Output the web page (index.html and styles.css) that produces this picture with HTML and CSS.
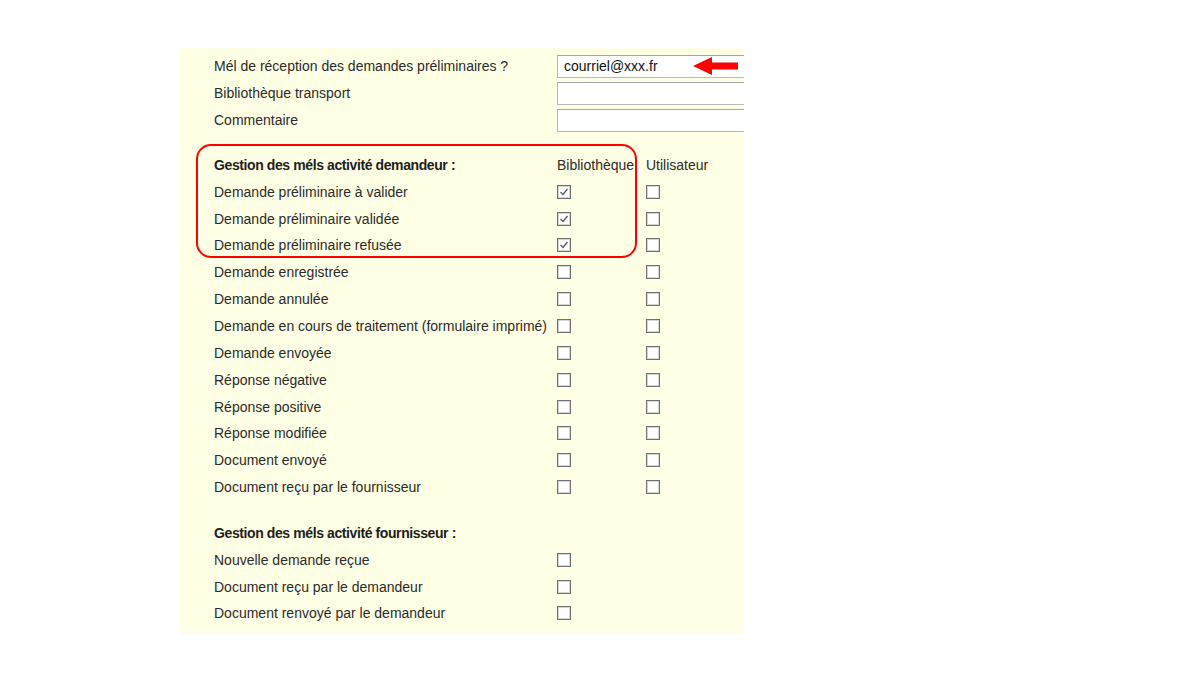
FILE: index.html
```html
<!DOCTYPE html>
<html lang="fr">
<head>
    <meta charset="UTF-8">
    <meta name="viewport" content="width=device-width, initial-scale=1.0">
    <title>Gestion des méls</title>
    <link rel="stylesheet" href="styles.css">
</head>
<body>

    <div class="panel">

        <div class="row">
            <span class="label">Mél de réception des demandes préliminaires ?</span>
            <div class="field">courriel@xxx.fr</div>
        </div>
        <div class="row">
            <span class="label">Bibliothèque transport</span>
            <div class="field"></div>
        </div>
        <div class="row">
            <span class="label">Commentaire</span>
            <div class="field"></div>
        </div>

        <div class="group">
            <div class="row head">
                <span class="label">Gestion des méls activité demandeur :</span>
                <span class="col">Bibliothèque</span>
                <span class="col">Utilisateur</span>
            </div>
            <div class="row">
                <span class="label">Demande préliminaire à valider</span>
                <span class="col"><span class="box checked"></span></span>
                <span class="col"><span class="box"></span></span>
            </div>
            <div class="row">
                <span class="label">Demande préliminaire validée</span>
                <span class="col"><span class="box checked"></span></span>
                <span class="col"><span class="box"></span></span>
            </div>
            <div class="row">
                <span class="label">Demande préliminaire refusée</span>
                <span class="col"><span class="box checked"></span></span>
                <span class="col"><span class="box"></span></span>
            </div>
            <div class="row">
                <span class="label">Demande enregistrée</span>
                <span class="col"><span class="box"></span></span>
                <span class="col"><span class="box"></span></span>
            </div>
            <div class="row">
                <span class="label">Demande annulée</span>
                <span class="col"><span class="box"></span></span>
                <span class="col"><span class="box"></span></span>
            </div>
            <div class="row">
                <span class="label">Demande en cours de traitement (formulaire imprimé)</span>
                <span class="col"><span class="box"></span></span>
                <span class="col"><span class="box"></span></span>
            </div>
            <div class="row">
                <span class="label">Demande envoyée</span>
                <span class="col"><span class="box"></span></span>
                <span class="col"><span class="box"></span></span>
            </div>
            <div class="row">
                <span class="label">Réponse négative</span>
                <span class="col"><span class="box"></span></span>
                <span class="col"><span class="box"></span></span>
            </div>
            <div class="row">
                <span class="label">Réponse positive</span>
                <span class="col"><span class="box"></span></span>
                <span class="col"><span class="box"></span></span>
            </div>
            <div class="row">
                <span class="label">Réponse modifiée</span>
                <span class="col"><span class="box"></span></span>
                <span class="col"><span class="box"></span></span>
            </div>
            <div class="row">
                <span class="label">Document envoyé</span>
                <span class="col"><span class="box"></span></span>
                <span class="col"><span class="box"></span></span>
            </div>
            <div class="row">
                <span class="label">Document reçu par le fournisseur</span>
                <span class="col"><span class="box"></span></span>
                <span class="col"><span class="box"></span></span>
            </div>
        </div>

        <div class="group group-2">
            <div class="row head">
                <span class="label">Gestion des méls activité fournisseur :</span>
            </div>
            <div class="row">
                <span class="label">Nouvelle demande reçue</span>
                <span class="col"><span class="box"></span></span>
            </div>
            <div class="row">
                <span class="label">Document reçu par le demandeur</span>
                <span class="col"><span class="box"></span></span>
            </div>
            <div class="row">
                <span class="label">Document renvoyé par le demandeur</span>
                <span class="col"><span class="box"></span></span>
            </div>
        </div>

        <!-- annotations -->
        <div class="highlight"></div>
        <svg class="arrow" width="46" height="20" viewBox="0 0 46 20">
            <polygon points="0,10 19,1 19,6.5 45,6.5 45,13.5 19,13.5 19,19" fill="#f00"/>
        </svg>

    </div>

</body>
</html>
```

FILE: styles.css
```css
body {
    margin: 0;
    background: #fff;
    font-family: "Liberation Sans", Arial, sans-serif;
    font-size: 14px;
    color: #2b2b2b;
}

.panel {
    position: relative;
    width: 530px;
    height: 581px;
    margin: 48px 0 0 179px;
    padding: 5px 0 0 35px;
    background: #ffffe5;
    overflow: hidden;
}

.row {
    display: flex;
    align-items: center;
    height: 26.85px;
}

.label {
    width: 343px;
    flex-shrink: 0;
    white-space: nowrap;
}

.col {
    width: 89px;
    flex-shrink: 0;
    display: flex;
    align-items: center;
    white-space: nowrap;
}

.field {
    flex-shrink: 0;
    width: 240px;
    height: 21px;
    line-height: 21px;
    padding-left: 6px;
    background: #fff;
    border: 1px solid #b9b9b9;
    border-top-color: #a5a5a5;
    color: #111;
}

.group {
    margin-top: 18px;
}

.group-2 {
    margin-top: 19px;
}

.head .label {
    font-weight: bold;
    letter-spacing: -0.4px;
    color: #1e1e1e;
}

.box {
    display: block;
    width: 12px;
    height: 12px;
    border: 1px solid #707070;
    box-shadow: inset 0 0 0 1px #d6d6d6;
    background: #fff;
}

.box.checked {
    background: #fff url("data:image/svg+xml;utf8,<svg xmlns='http://www.w3.org/2000/svg' width='12' height='12'><polyline points='2.5,6 5,8.5 9.5,3' fill='none' stroke='%23606060' stroke-width='1.4'/></svg>") no-repeat center;
}

.highlight {
    position: absolute;
    left: 17px;
    top: 96px;
    width: 437px;
    height: 110px;
    border: 2px solid #f00;
    border-radius: 15px;
}

.arrow {
    position: absolute;
    left: 514px;
    top: 8px;
}
```
